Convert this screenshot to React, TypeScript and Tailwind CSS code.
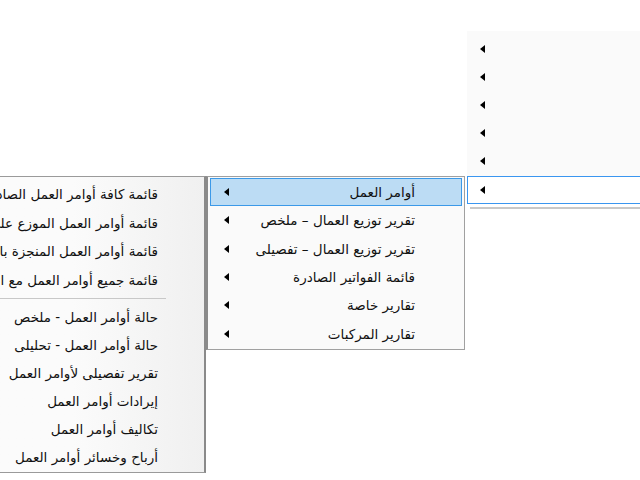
import React from "react";

const Arrow = () => (
  <svg width="5" height="8" viewBox="0 0 5 8" className="shrink-0">
    <polygon points="5,0 5,8 0,4" fill="#000" />
  </svg>
);

const font = { fontFamily: '"DejaVu Sans", Tahoma, sans-serif' };

const middleItems = [
  "أوامر العمل",
  "تقرير توزيع العمال – ملخص",
  "تقرير توزيع العمال – تفصيلى",
  "قائمة الفواتير الصادرة",
  "تقارير خاصة",
  "تقارير المركبات",
];

const leftTop = [
  "قائمة كافة أوامر العمل الصادرة",
  "قائمة أوامر العمل الموزع على العمال",
  "قائمة أوامر العمل المنجزة بالكامل",
  "قائمة جميع أوامر العمل مع التفاصيل",
];
const leftBottom = [
  "حالة أوامر العمل - ملخص",
  "حالة أوامر العمل - تحليلى",
  "تقرير تفصيلى لأوامر العمل",
  "إيرادات أوامر العمل",
  "تكاليف أوامر العمل",
  "أرباح وخسائر أوامر العمل",
];

export default function App() {
  return (
    <div className="relative w-[640px] h-[480px] bg-white overflow-hidden text-[13.5px] text-[#111]" style={font}>
      {/* top-right menu (partially visible) */}
      <div className="absolute left-[467px] top-[31px] w-[173px] h-[145px] bg-[#fafafa] flex flex-col pt-[4px]">
        {[0, 1, 2, 3, 4].map((i) => (
          <div key={i} className="h-[28px] flex items-center pl-[13px]">
            <Arrow />
          </div>
        ))}
      </div>
      <div className="absolute left-[467px] top-[176px] w-[180px] h-[28px] bg-white border border-[#3a96f0] flex items-center pl-[12px]">
        <Arrow />
      </div>
      <div className="absolute left-[470px] top-[207px] w-[170px] h-[2px] bg-[#c8c8c8]" />

      {/* middle menu */}
      <div className="absolute left-[206px] top-[176px] w-[259px] h-[174px] bg-[#fafafa] border border-[#a0a0a0] border-l-[2px] border-l-[#8a8a8a] flex flex-col py-[1px] px-[2px]">
        {middleItems.map((t, i) => (
          <div
            key={i}
            dir="rtl"
            className={
              "h-[28.4px] flex items-center justify-between pr-[46px] pl-[13px] " +
              (i === 0 ? "bg-[#bcdcf4] border border-[#3b99e8]" : "border border-transparent")
            }
          >
            <span className="whitespace-nowrap">{t}</span>
            <Arrow />
          </div>
        ))}
      </div>

      {/* left menu (cut off) */}
      <div className="absolute left-[-60px] top-[176px] w-[266px] h-[297px] bg-gradient-to-l from-[#f0f0f0] via-[#fbfbfb] to-[#fbfbfb] border border-[#9a9a9a] border-r-[2px] border-r-[#8a8a8a] flex flex-col pt-[3px] overflow-hidden">
        {leftTop.map((t, i) => (
          <div key={i} dir="rtl" className="h-[28.5px] shrink-0 flex items-center pr-[46px]">
            <span className="whitespace-nowrap">{t}</span>
          </div>
        ))}
        <div className="h-[9px] shrink-0 flex items-center justify-end pr-[38px]">
          <div className="w-[226px] h-[1px] bg-[#c8c8c8]" />
        </div>
        {leftBottom.map((t, i) => (
          <div key={i} dir="rtl" className="h-[28px] shrink-0 flex items-center pr-[46px]">
            <span className="whitespace-nowrap">{t}</span>
          </div>
        ))}
      </div>
    </div>
  );
}
